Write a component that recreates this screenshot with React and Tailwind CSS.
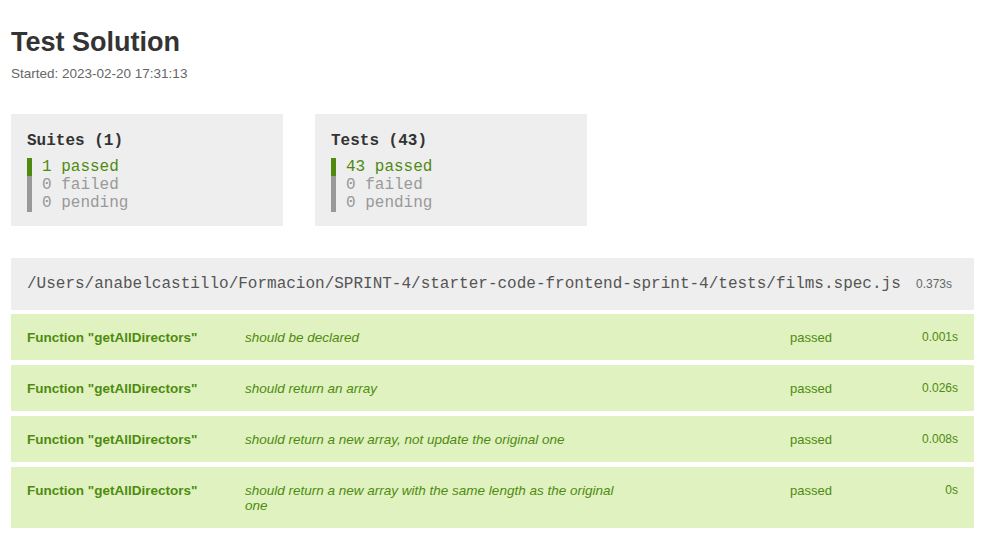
import React from 'react';

const tests = [
  { name: 'Function "getAllDirectors"', desc: 'should be declared', time: '0.001s' },
  { name: 'Function "getAllDirectors"', desc: 'should return an array', time: '0.026s' },
  { name: 'Function "getAllDirectors"', desc: 'should return a new array, not update the original one', time: '0.008s' },
  { name: 'Function "getAllDirectors"', desc: 'should return a new array with the same length as the original one', time: '0s' },
];

const SummaryBox = ({ title, passed }) => (
  <div className="w-[272px] bg-[#eeeeee] px-4 pt-[18px] pb-[14px] font-['Liberation_Mono',monospace] text-[16px] leading-[18px]">
    <div className="font-bold text-[#333]">{title}</div>
    <div className="mt-2">
      <div className="border-l-[5px] border-[#4F8A10] pl-[10px] text-[#4F8A10]">{passed} passed</div>
      <div className="border-l-[5px] border-[#999] pl-[10px] text-[#999]">0 failed</div>
      <div className="border-l-[5px] border-[#999] pl-[10px] text-[#999]">0 pending</div>
    </div>
  </div>
);

export default function App() {
  return (
    <div className="min-h-screen bg-white pl-[11px] pr-[7px] font-['Liberation_Sans',Arial,sans-serif]">
      {/* Header */}
      <div className="pt-[26px]">
        <h1 className="text-[27px] font-bold leading-[32px] text-[#333]">Test Solution</h1>
        <div className="mt-[8px] text-[13.5px] leading-[16px] text-[#666]">Started: 2023-02-20 17:31:13</div>
      </div>

      {/* Summary */}
      <div className="mt-[32px] flex gap-8">
        <SummaryBox title="Suites (1)" passed="1" />
        <SummaryBox title="Tests (43)" passed="43" />
      </div>

      {/* Suite */}
      <div className="mt-8">
        <div className="flex h-[52px] items-center justify-between bg-[#eeeeee] pl-4 pr-[22px]">
          <span className="font-['Liberation_Mono',monospace] text-[16px] text-[#555]">
            /Users/anabelcastillo/Formacion/SPRINT-4/starter-code-frontend-sprint-4/tests/films.spec.js
          </span>
          <span className="text-[12px] text-[#666]">0.373s</span>
        </div>

        <div className="mt-1 flex flex-col gap-[5px]">
          {tests.map((t, i) => (
            <div key={i} className="grid grid-cols-[218px_545px_1fr_auto] bg-[#DFF2BF] px-4 pt-4 pb-[15px] text-[13px] leading-[15px] text-[#4F8A10]">
              <div className="text-[13.5px] font-bold">{t.name}</div>
              <div className="max-w-[380px] text-[13.5px] italic">{t.desc}</div>
              <div>passed</div>
              <div className="text-right text-[12px]">{t.time}</div>
            </div>
          ))}
        </div>
      </div>
    </div>
  );
}
